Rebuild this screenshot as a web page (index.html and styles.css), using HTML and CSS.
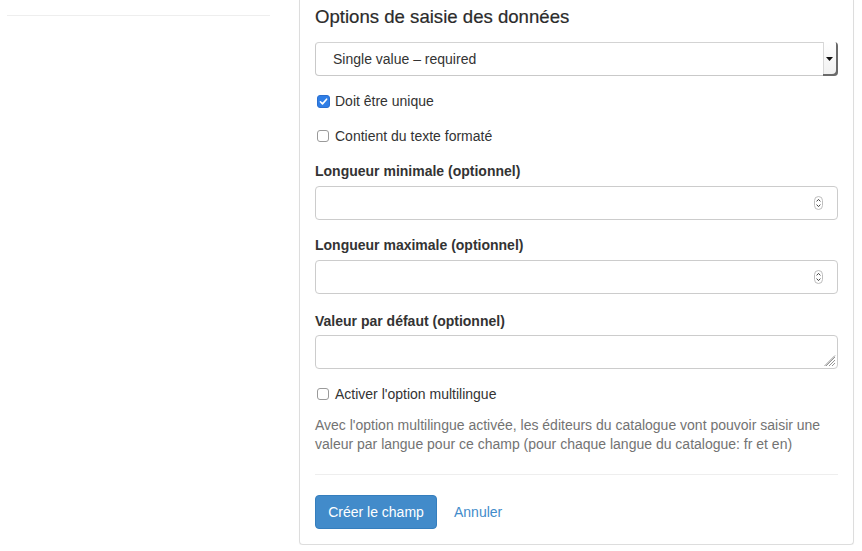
FILE: index.html
```html
<!DOCTYPE html>
<html lang="fr">
<head>
<meta charset="utf-8">
<title>Options de saisie des données</title>
<link rel="stylesheet" href="styles.css">
</head>
<body>
<div class="page">
  <aside class="sidebar">
    <div class="sidebar-rule"></div>
  </aside>
  <main class="panel">
    <h4 class="panel-title">Options de saisie des données</h4>

    <div class="select">
      <span class="select-text">Single value – required</span>
      <span class="select-arrow">
        <svg width="7" height="4" viewBox="0 0 7 4"><path d="M0 0H7L3.5 4Z" fill="#111"/></svg>
      </span>
    </div>

    <label class="check first">
      <span class="box checked">
        <svg width="13" height="13" viewBox="0 0 13 13"><rect x="0.5" y="0.5" width="12" height="12" rx="2.5" fill="#2f7ee6" stroke="#2b6fcf"/><path d="M3.4 6.8L5.5 8.9L9.6 4.2" fill="none" stroke="#fff" stroke-width="1.6" stroke-linecap="round" stroke-linejoin="round"/></svg>
      </span>
      <span>Doit être unique</span>
    </label>

    <label class="check">
      <span class="box"></span>
      <span>Contient du texte formaté</span>
    </label>

    <div class="field">
      <div class="field-label">Longueur minimale (optionnel)</div>
      <div class="control">
        <span class="control-fill"></span>
        <svg class="spinner" width="9" height="14" viewBox="0 0 9 14"><rect x="0.5" y="0.5" width="8" height="13" rx="4" fill="#fff" stroke="#bdbdbd"/><path d="M2.6 5.4L4.5 3.4L6.4 5.4M2.6 8.6L4.5 10.6L6.4 8.6" fill="none" stroke="#444" stroke-width="1"/></svg>
      </div>
    </div>

    <div class="field">
      <div class="field-label">Longueur maximale (optionnel)</div>
      <div class="control">
        <span class="control-fill"></span>
        <svg class="spinner" width="9" height="14" viewBox="0 0 9 14"><rect x="0.5" y="0.5" width="8" height="13" rx="4" fill="#fff" stroke="#bdbdbd"/><path d="M2.6 5.4L4.5 3.4L6.4 5.4M2.6 8.6L4.5 10.6L6.4 8.6" fill="none" stroke="#444" stroke-width="1"/></svg>
      </div>
    </div>

    <div class="field field-text">
      <div class="field-label">Valeur par défaut (optionnel)</div>
      <div class="control textarea">
        <span class="control-fill"></span>
        <svg class="grip" width="12" height="12" viewBox="0 0 12 12"><path d="M11 2L2 11M11 5L5 11M11 8L8 11M11 0.5L0.5 11" fill="none" stroke="#8a8a8a" stroke-width="0.9"/></svg>
      </div>
    </div>

    <label class="check multi">
      <span class="box"></span>
      <span>Activer l'option multilingue</span>
    </label>

    <p class="help">Avec l'option multilingue activée, les éditeurs du catalogue vont pouvoir saisir une valeur par langue pour ce champ (pour chaque langue du catalogue: fr et en)</p>

    <div class="rule"></div>

    <div class="actions">
      <button class="btn-primary" type="button">Créer le champ</button>
      <a class="link" href="#">Annuler</a>
    </div>
  </main>
</div>
</body>
</html>
```

FILE: styles.css
```css
* { box-sizing: border-box; }

html, body {
  margin: 0;
  padding: 0;
  background: #fff;
}

body {
  font-family: "Liberation Sans", Arial, sans-serif;
  font-size: 14px;
  line-height: 20px;
  color: #333;
}

.page {
  display: flex;
  align-items: flex-start;
  padding-left: 7px;
}

.sidebar {
  width: 263px;
  padding-top: 15px;
  flex: none;
}

.sidebar-rule {
  height: 1px;
  background: #eeeeee;
}

.panel {
  margin-left: 29px;
  width: 555px;
  flex: none;
  border: 1px solid #dddddd;
  border-top: none;
  border-radius: 0 0 4px 4px;
  box-shadow: 0 1px 1px rgba(0, 0, 0, 0.05);
  padding: 0 15px 15px;
  display: flex;
  flex-direction: column;
}

.panel-title {
  margin: 7px 0 15px;
  font-size: 18.6px;
  line-height: 20px;
  font-weight: 500;
  color: #2b2b2b;
  -webkit-text-stroke: 0.2px #2b2b2b;
}

.select {
  height: 34px;
  border: 1px solid #c9c9c9;
  border-top-color: #d3d3d3;
  border-radius: 4px;
  display: flex;
  align-items: stretch;
  background: #fff;
}

.select-text {
  flex: 1;
  padding-left: 17px;
  line-height: 32px;
  color: #333;
}

.select-arrow {
  width: 15px;
  margin: -1px -1px -1px 0;
  border-radius: 0 4px 4px 0;
  background: linear-gradient(#ffffff, #f0f0f0);
  box-shadow: inset -2px -2px 0 #6a6a6a, inset 1px 0 0 #d8d8d8;
  display: flex;
  align-items: center;
  justify-content: center;
  padding-right: 2px;
}

.check {
  display: flex;
  align-items: center;
  height: 20px;
  margin-top: 15px;
  padding-left: 2px;
  color: #333;
}

.box {
  width: 12px;
  height: 12px;
  margin-right: 6px;
  flex: none;
  border: 1px solid #9a9a9a;
  border-radius: 3px;
  background: #fff;
}

.box.checked {
  width: 13px;
  height: 13px;
  margin-right: 5px;
  border: none;
  display: flex;
}

.field {
  margin-top: 15px;
  display: flex;
  flex-direction: column;
}

.field-text {
  margin-top: 17px;
}

.field-label {
  font-weight: bold;
  height: 20px;
  margin-bottom: 5px;
}

.field-text .field-label {
  margin-bottom: 4px;
}

.control {
  height: 34px;
  border: 1px solid #cccccc;
  border-radius: 4px;
  display: flex;
  align-items: center;
  padding-right: 14px;
  background: #fff;
}

.control-fill {
  flex: 1;
}

.textarea {
  align-items: flex-end;
  padding-right: 1px;
  padding-bottom: 1px;
}

.check.multi {
  margin-top: 15px;
}

.help {
  margin: 12px 0 0;
  color: #737373;
  line-height: 19px;
}

.rule {
  height: 1px;
  background: #eeeeee;
  margin-top: 20px;
}

.actions {
  margin-top: 20px;
  display: flex;
  align-items: center;
}

.btn-primary {
  font-family: inherit;
  font-size: 14px;
  height: 34px;
  padding: 0 12px;
  width: 122px;
  color: #fff;
  background: #428bca;
  border: 1px solid #357ebd;
  border-radius: 4px;
}

.link {
  margin-left: 17px;
  color: #428bca;
  text-decoration: none;
}
```
